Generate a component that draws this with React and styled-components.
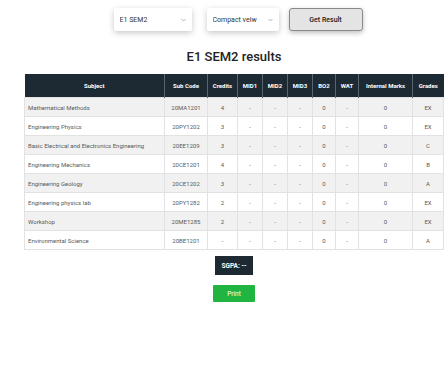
import React from "react";
import styled, { createGlobalStyle } from "styled-components";

const GlobalStyle = createGlobalStyle`
  body {
    margin: 0;
    background: #ffffff;
    font-family: Roboto, "Liberation Sans", sans-serif;
  }
`;

const Page = styled.div`
  width: 448px;
  height: 378px;
  display: flex;
  flex-direction: column;
  align-items: center;
  padding-top: 8px;
  box-sizing: border-box;
`;

const Controls = styled.div`
  display: flex;
  align-items: center;
  margin-left: 28px;
`;

const SelectBox = styled.div`
  width: ${(p) => p.width}px;
  height: 23px;
  margin-right: ${(p) => p.gap}px;
  display: flex;
  align-items: center;
  background: #fff;
  border-radius: 2px;
  box-shadow: 0 2px 6px rgba(0, 0, 0, 0.22);
  padding: 0 6px 0 6px;
  box-sizing: border-box;
`;

const Select = styled.select`
  flex: 1;
  appearance: none;
  border: none;
  background: transparent;
  font-family: Roboto, "Liberation Sans", sans-serif;
  font-size: 7px;
  color: #333;
  padding: 0;
  outline: none;
`;

const Button = styled.button`
  width: 74px;
  height: 23px;
  background: #e4e4e4;
  border: 1px solid #8a8a8a;
  border-radius: 3px;
  box-shadow: 0 2px 5px rgba(0, 0, 0, 0.25);
  font-family: Roboto, "Liberation Sans", sans-serif;
  font-size: 7px;
  font-weight: 500;
  color: #222;
`;

const Title = styled.h2`
  margin: 18px 0 10px 0;
  font-size: 13px;
  font-weight: 500;
  color: #222;
  margin-left: 20px;
`;

const Table = styled.table`
  width: 418px;
  margin-left: 20px;
  border-collapse: collapse;
  table-layout: fixed;
  font-size: 6px;
`;

const Th = styled.th`
  background: #1d2a33;
  color: #fff;
  font-weight: 700;
  height: 23px;
  padding: 0;
  text-align: center;
  border-left: 1px solid #59646c;
  &:first-child {
    border-left: none;
  }
`;

const Row = styled.tr`
  background: ${(p) => (p.odd ? "#f1f1f1" : "#ffffff")};
`;

const Td = styled.td`
  height: 18px;
  padding: 0;
  color: #5a5a5a;
  text-align: ${(p) => (p.left ? "left" : "center")};
  padding-left: ${(p) => (p.left ? "3px" : "0")};
  border: 1px solid #e2e2e2;
  white-space: nowrap;
  overflow: hidden;
`;

const Sgpa = styled.div`
  margin-top: 6px;
  margin-left: 20px;
  background: #1d2a33;
  color: #fff;
  font-size: 6.5px;
  font-weight: 700;
  padding: 0 6px;
  height: 19px;
  display: flex;
  align-items: center;
`;

const PrintButton = styled.button`
  margin-top: 10px;
  margin-left: 20px;
  width: 42px;
  height: 17px;
  background: #1fb540;
  color: #fff;
  border: none;
  border-radius: 1px;
  font-family: Roboto, "Liberation Sans", sans-serif;
  font-size: 6.5px;
`;

const Chevron = () => (
  <svg width="5" height="4" viewBox="0 0 10 6" fill="none">
    <path d="M1 1l4 4 4-4" stroke="#999" strokeWidth="1.4" />
  </svg>
);

const cols = [140, 43, 30, 25, 25, 25, 23, 23, 54, 31];
const headers = ["Subject", "Sub Code", "Credits", "MID1", "MID2", "MID3", "BO2", "WAT", "Internal Marks", "Grades"];

const subjects = [
  ["Mathematical Methods", "20MA1201", "4", "EX"],
  ["Engineering Physics", "20PY1202", "3", "EX"],
  ["Basic Electrical and Electronics Engineering", "20EE1209", "3", "C"],
  ["Engineering Mechanics", "20CE1201", "4", "B"],
  ["Engineering Geology", "20CE1202", "3", "A"],
  ["Engineering physics lab", "20PY1282", "2", "EX"],
  ["Workshop", "20ME1285", "2", "EX"],
  ["Environmental Science", "20BE1201", "-", "A"],
];

export default function App() {
  return (
    <Page>
      <GlobalStyle />
      <Controls>
        <SelectBox width={78} gap={15}>
          <Select defaultValue="E1 SEM2">
            <option>E1 SEM2</option>
          </Select>
          <Chevron />
        </SelectBox>
        <SelectBox width={72} gap={10}>
          <Select defaultValue="Compact veiw">
            <option>Compact veiw</option>
          </Select>
          <Chevron />
        </SelectBox>
        <Button>Get Result</Button>
      </Controls>
      <Title>E1 SEM2 results</Title>
      <Table>
        <colgroup>
          {cols.map((w, i) => (
            <col key={i} style={{ width: w }} />
          ))}
        </colgroup>
        <thead>
          <tr>
            {headers.map((h) => (
              <Th key={h}>{h}</Th>
            ))}
          </tr>
        </thead>
        <tbody>
          {subjects.map(([name, code, credits, grade], i) => (
            <Row key={code} odd={i % 2 === 0}>
              <Td left>{name}</Td>
              <Td>{code}</Td>
              <Td>{credits}</Td>
              <Td>-</Td>
              <Td>-</Td>
              <Td>-</Td>
              <Td>0</Td>
              <Td>-</Td>
              <Td>0</Td>
              <Td>{grade}</Td>
            </Row>
          ))}
        </tbody>
      </Table>
      <Sgpa>SGPA: --</Sgpa>
      <PrintButton>Print</PrintButton>
    </Page>
  );
}
